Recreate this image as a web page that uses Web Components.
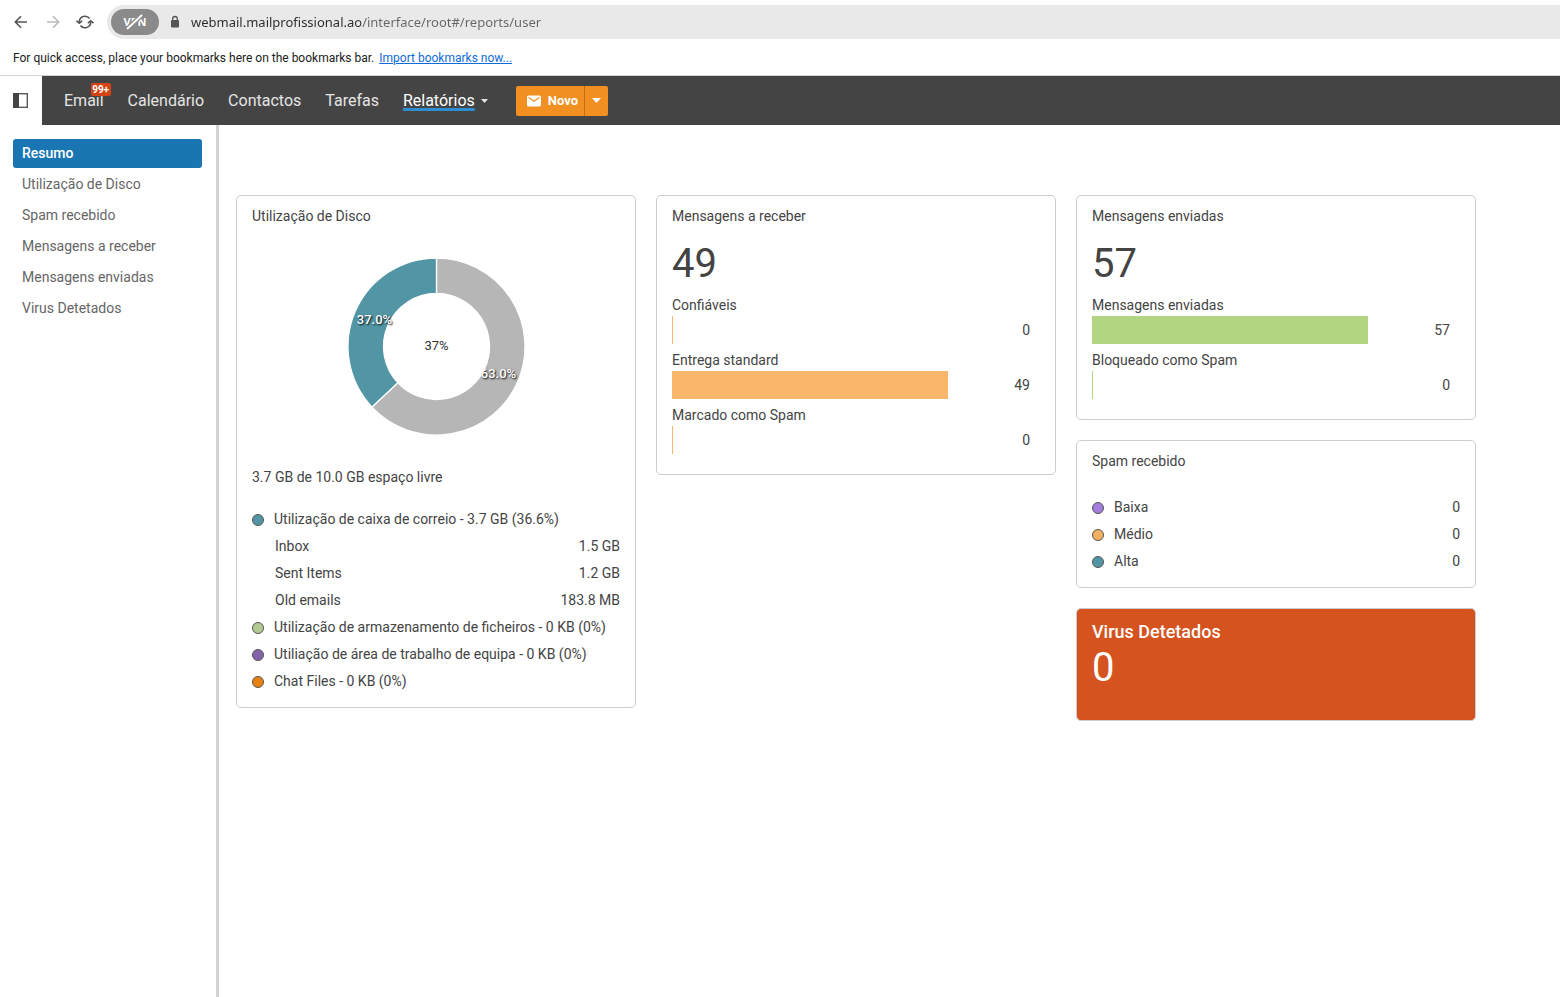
<!DOCTYPE html>
<html lang="pt">
<head>
<meta charset="utf-8">
<title>Relatórios</title>
<style>
  html, body { margin: 0; min-height: 100%; }
  body { background: #fff; font-family: Roboto, sans-serif; font-size: 14px; line-height: 20px; color: #444; }
</style>
</head>
<body>
<reports-page></reports-page>

<script>
const define = (name, html, setup) => {
  const template = document.createElement('template');
  template.innerHTML = html;
  customElements.define(name, class extends HTMLElement {
    constructor() {
      super();
      this.attachShadow({ mode: 'open' }).append(template.content.cloneNode(true));
    }
    connectedCallback() {
      if (setup) setup(this, this.shadowRoot);
    }
  });
};

/* Browser toolbar with the address field */
define('browser-toolbar', `
  <style>
    :host { display: flex; align-items: center; height: 34px; padding: 5px 0 5px 11px; }
    button { border: 0; padding: 0; background: none; width: 20px; height: 20px; margin-right: 12px; }
    svg { display: block; }
    .field { flex: 1; display: flex; align-items: center; height: 34px; background: #e9e9e9; border-radius: 17px 0 0 17px; padding-left: 4px; }
    .field .vpn { width: 48px; height: 26px; border-radius: 13px; background: #8a8a8a; margin-right: 10px; color: #fff; font: bold 11px/26px "Open Sans", sans-serif; position: relative; }
    .vpn svg { position: absolute; left: 0; top: 0; }
    .lock { margin-right: 10px; }
    input { flex: 1; min-width: 0; border: 0; padding: 0; outline: 0; height: 24px; font: 13px "Noto Sans", sans-serif; color: #333;
      background: linear-gradient(to right, #2b2b2b 170px, #666 170px); -webkit-background-clip: text; background-clip: text; -webkit-text-fill-color: transparent; }
  </style>
  <button aria-label="Back"><svg width="20" height="20" viewBox="0 0 20 20" fill="none" stroke="#555" stroke-width="1.6"><path d="M16 10H4.500M10 4.300L4.300 10L10 15.700"/></svg></button>
  <button aria-label="Forward"><svg width="20" height="20" viewBox="0 0 20 20" fill="none" stroke="#bbb" stroke-width="1.6"><path d="M4 10h11.500M10 4.300L15.700 10L10 15.700"/></svg></button>
  <button aria-label="Reload"><svg width="20" height="20" viewBox="0 0 20 20" fill="none" stroke="#555" stroke-width="1.6"><path d="M4.300 11V9.500A5.700 5.700 0 0 1 14.500 6.500M15.700 9v1.500A5.700 5.700 0 0 1 5.500 13.500"/><path d="M1.500 8.800L4.300 11.300L7.100 8.800M12.900 11.200L15.700 8.700L18.500 11.200"/></svg></button>
  <div class="field">
    <button class="vpn" aria-label="VPN">VPN<svg width="48" height="26" viewBox="0 0 48 26"><path d="M15 21L31 6" stroke="#8a8a8a" stroke-width="4.500"/><path d="M16 20L31 6" stroke="#fff" stroke-width="2"/></svg></button>
    <svg class="lock" width="12" height="14" viewBox="0 0 12 14"><rect x="2" y="5" width="8" height="7.500" rx="1" fill="#555"/><path d="M3.700 5.500V3.800a2.300 2.300 0 0 1 4.600 0V5.500" fill="none" stroke="#555" stroke-width="1.300"/></svg>
    <input type="text" aria-label="Address" value="webmail.mailprofissional.ao/interface/root#/reports/user">
  </div>
`);

/* Hint shown in place of the bookmarks */
define('bookmarks-bar', `
  <style>
    :host { display: flex; gap: 5px; align-items: center; height: 27px; padding: 0 0 4px 13px; border-bottom: 1px solid #d3d3d3; font: 12px/16px Roboto, sans-serif; color: #202020; }
    a { color: #0f6bd6; text-decoration: underline; }
  </style>
  <span>For quick access, place your bookmarks here on the bookmarks bar.</span>
  <a href="#import">Import bookmarks now...</a>
`);

define('app-header', `
  <style>
    :host { display: flex; align-items: center; height: 49px; background: #444; color: #e4e4e4; }
    .toggle { width: 42px; height: 49px; border: 0; padding: 0 0 0 13px; background: #fff; }
    .toggle svg { display: block; }
    nav { display: flex; gap: 24px; margin-left: 22px; padding-top: 1px; }
    nav a { color: inherit; text-decoration: none; font-size: 16px; line-height: 48px; position: relative; }
    nav a.current { color: #fff; display: flex; gap: 6px; align-items: center; }
    nav a.current span { text-decoration: underline 3px #2d8fd2; text-underline-offset: 2px; }
    .badge { position: absolute; right: -7px; top: 6px; width: 20px; height: 13px; background: #d84315; color: #fff; border-radius: 2px; font-size: 10px; font-weight: 700; line-height: 14px; text-align: center; }
    .new { display: flex; margin-left: 28px; height: 30px; border-radius: 2px; overflow: hidden; }
    .new button { border: 0; padding: 0; background: #f28f21; color: #fff; height: 30px; display: flex; align-items: center; font: 700 13px Roboto, sans-serif; }
    .new .main { width: 68px; gap: 7px; padding-left: 11px; }
    .new .more { width: 24px; border-left: 1px solid #c06f16; justify-content: center; }
  </style>
  <button class="toggle" aria-label="Painel lateral"><svg width="15" height="15" viewBox="0 0 15 15"><rect x=".7" y=".7" width="13.600" height="13.600" fill="#fff" stroke="#5a5a5a" stroke-width="1.400"/><rect x="0" y="0" width="6" height="15" fill="#444"/></svg></button>
  <nav>
    <a href="#email">Email<span class="badge">99+</span></a>
    <a href="#calendario">Calendário</a>
    <a href="#contactos">Contactos</a>
    <a href="#tarefas">Tarefas</a>
    <a href="#relatorios" class="current"><span>Relatórios</span><svg width="7" height="4" viewBox="0 0 7 4"><path d="M0 0h7L3.500 4z" fill="#e4e4e4"/></svg></a>
  </nav>
  <div class="new">
    <button class="main"><svg width="14" height="12" viewBox="0 0 14 12"><rect x="0" y="0.500" width="14" height="11" rx="1.500" fill="#fff"/><path d="M1.500 2.500L7 6.300L12.500 2.500" fill="none" stroke="#f28f21" stroke-width="1.100"/></svg>Novo</button>
    <button class="more" aria-label="Mais opções"><svg width="9" height="5" viewBox="0 0 9 5"><path d="M0 0h9L4.500 5z" fill="#fff"/></svg></button>
  </div>
`);

define('side-nav', `
  <style>
    :host { display: flex; flex-direction: column; gap: 2px; box-sizing: border-box; width: 219px; padding: 14px 14px 14px 13px; border-right: 3px solid #d3d3d3; }
  </style>
  <slot></slot>
`);

define('side-link', `
  <style>
    a { display: block; padding: 0 9px; border-radius: 3px; line-height: 29px; color: #666; text-decoration: none; }
    :host { display: block; }
    :host([current]) a { background: #1976b2; color: #fff; font-weight: 500; }
  </style>
  <a href="#report"><slot></slot></a>
`);

/* Bordered box with a title line */
define('report-card', `
  <style>
    :host { display: block; box-sizing: border-box; border: 1px solid #ccc; border-radius: 5px; padding: 10px 15px 12px; background: #fff; }
    h2 { margin: 0; font-size: 14px; line-height: 20px; font-weight: 400; }
    :host([alert]) { background: #d5531e; color: #fff; min-height: 113px; padding-top: 11px; }
    :host([alert]) h2 { font-size: 18px; line-height: 24px; font-weight: 500; }
  </style>
  <h2></h2>
  <slot></slot>
`, (host, root) => { root.querySelector('h2').textContent = host.getAttribute('heading'); });

define('big-number', `
  <style>
    :host { display: block; font-size: 40px; line-height: 48px; }
    :host([spaced]) { padding: 14px 0 1px; }
  </style>
  <slot></slot>
`);

/* Label, horizontal bar and its count */
define('bar-row', `
  <style>
    :host { display: block; padding-top: 5px; }
    .label { line-height: 22px; }
    .row { display: flex; justify-content: space-between; align-items: center; height: 28px; padding-right: 10px; }
    .track { width: 77%; height: 28px; }
    .fill { height: 28px; min-width: 1px; background: var(--bar); }
  </style>
  <div class="label"><slot></slot></div>
  <div class="row"><div class="track"><div class="fill"></div></div><span class="value"></span></div>
`, (host, root) => {
  root.querySelector('.fill').style.width = host.getAttribute('percent') + '%';
  root.querySelector('.value').textContent = host.getAttribute('value');
});

define('legend-list', `
  <style>
    :host { display: block; padding-top: var(--space, 0); }
  </style>
  <div role="list"><slot></slot></div>
`);

define('legend-item', `
  <style>
    :host { display: flex; align-items: center; line-height: 27px; }
    .dot { flex: none; box-sizing: border-box; width: 12px; height: 12px; margin-right: 10px; border: 1px solid #555; border-radius: 50%; background: var(--dot); }
    :host([sub]) .dot { display: none; }
    :host([sub]) { padding-left: 23px; }
    .value { margin-left: auto; }
  </style>
  <i class="dot"></i><span><slot></slot></span><span class="value"></span>
`, (host, root) => {
  host.setAttribute('role', 'listitem');
  root.querySelector('.value').textContent = host.getAttribute('value') || '';
});

define('disk-donut', `
  <style>
    :host { display: block; }
    svg { display: block; margin: 0 auto; }
    text { font: 13px Roboto, sans-serif; text-anchor: middle; }
    .slice { fill: #fff; text-shadow: 1px 1px 2px #000; font-weight: 500; }
  </style>
  <svg width="240" height="240" viewBox="-120.500 -120.500 240 240" role="img" aria-label="Utilização de Disco">
    <g stroke="#fff" stroke-width="1.300"><path class="free" fill="#b6b6b6"/><path class="used" fill="#5296a5"/></g>
    <text class="slice" x="-62" y="-23">37.0%</text>
    <text class="slice" x="62" y="31">63.0%</text>
    <text x="0" y="3" fill="#333">37%</text>
  </svg>
`, (host, root) => {
  const outer = 88.5, inner = 53;
  const arc = (from, to) => {
    const point = (r, t) => [r * Math.sin(2 * Math.PI * t), -r * Math.cos(2 * Math.PI * t)].join(' ');
    const large = to - from > 0.5 ? 1 : 0;
    return `M${point(outer, from)}A${outer} ${outer} 0 ${large} 1 ${point(outer, to)}L${point(inner, to)}A${inner} ${inner} 0 ${large} 0 ${point(inner, from)}Z`;
  };
  root.querySelector('.free').setAttribute('d', arc(0, 0.63));
  root.querySelector('.used').setAttribute('d', arc(0.63, 1));
});

define('reports-page', `
  <style>
    :host { display: flex; flex-direction: column; min-height: 100vh; }
    .body { flex: 1; display: flex; }
    side-nav { flex: none; }
    main { flex: 1; display: grid; grid-template-columns: repeat(3, minmax(0, 1fr)); gap: 20px; align-items: start; align-content: start; padding: 70px 84px 17px 17px; }
    section { display: grid; gap: 20px; }
    .free { margin: 0; line-height: 22px; }
    .bars { padding-bottom: 20px; }
    @media (max-width: 1100px) { main { grid-template-columns: minmax(0, 1fr); padding-right: 17px; } }
  </style>
  <header>
    <browser-toolbar></browser-toolbar>
    <bookmarks-bar></bookmarks-bar>
    <app-header></app-header>
  </header>
  <div class="body">
    <side-nav>
      <side-link current>Resumo</side-link>
      <side-link>Utilização de Disco</side-link>
      <side-link>Spam recebido</side-link>
      <side-link>Mensagens a receber</side-link>
      <side-link>Mensagens enviadas</side-link>
      <side-link>Virus Detetados</side-link>
    </side-nav>
    <main>
      <section>
        <report-card heading="Utilização de Disco">
          <disk-donut></disk-donut>
          <p class="free">3.7 GB de 10.0 GB espaço livre</p>
          <legend-list style="--space: 18px">
            <legend-item style="--dot: #5296a5">Utilização de caixa de correio - 3.7 GB (36.6%)</legend-item>
            <legend-item sub value="1.5 GB">Inbox</legend-item>
            <legend-item sub value="1.2 GB">Sent Items</legend-item>
            <legend-item sub value="183.8 MB">Old emails</legend-item>
            <legend-item style="--dot: #b3cb93">Utilização de armazenamento de ficheiros - 0 KB (0%)</legend-item>
            <legend-item style="--dot: #8465ab">Utiliação de área de trabalho de equipa - 0 KB (0%)</legend-item>
            <legend-item style="--dot: #e8820f">Chat Files - 0 KB (0%)</legend-item>
          </legend-list>
        </report-card>
      </section>
      <section>
        <report-card class="bars" heading="Mensagens a receber" style="--bar: #fab76c">
          <big-number spaced>49</big-number>
          <bar-row percent="0" value="0">Confiáveis</bar-row>
          <bar-row percent="100" value="49">Entrega standard</bar-row>
          <bar-row percent="0" value="0">Marcado como Spam</bar-row>
        </report-card>
      </section>
      <section>
        <report-card class="bars" heading="Mensagens enviadas" style="--bar: #b1d580">
          <big-number spaced>57</big-number>
          <bar-row percent="100" value="57">Mensagens enviadas</bar-row>
          <bar-row percent="0" value="0">Bloqueado como Spam</bar-row>
        </report-card>
        <report-card heading="Spam recebido">
          <legend-list style="--space: 23px">
            <legend-item style="--dot: #a27ddb" value="0">Baixa</legend-item>
            <legend-item style="--dot: #f2b15f" value="0">Médio</legend-item>
            <legend-item style="--dot: #5296a5" value="0">Alta</legend-item>
          </legend-list>
        </report-card>
        <report-card alert heading="Virus Detetados">
          <big-number>0</big-number>
        </report-card>
      </section>
    </main>
  </div>
`);
</script>
</body>
</html>
